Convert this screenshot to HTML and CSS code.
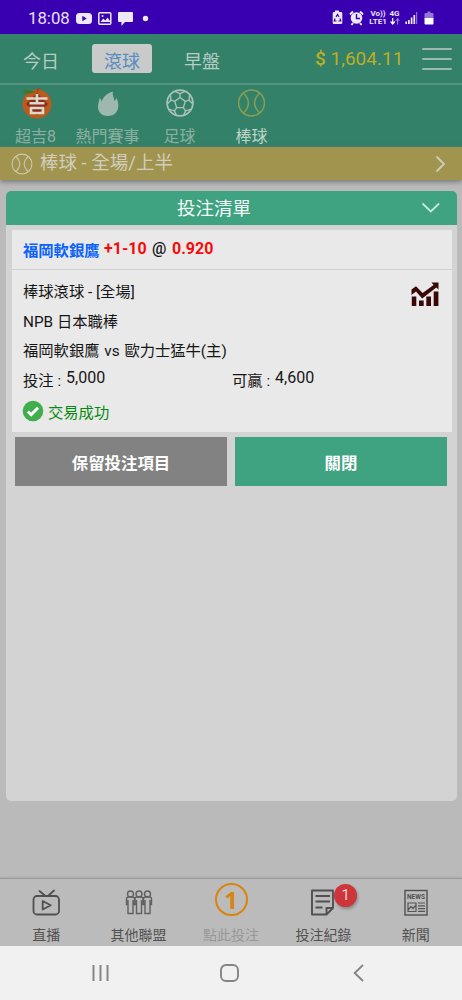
FILE: index.html
```
<!DOCTYPE html>
<html lang="zh-Hant">
<head>
<meta charset="utf-8">
<title>投注清單</title>
<link rel="stylesheet" href="styles.css">
</head>
<body>
<div class="screen">
  <div class="status">
    <span class="clock">18:08</span>
    <svg class="status-left" width="76" height="20" viewBox="0 0 76 20">
      <rect x="0" y="5" width="16" height="11" rx="3.5" fill="#eee8fb"/><path d="M6.3 7.800v5.400l4.400-2.700z" fill="#3900b2"/>
      <rect x="22.800" y="4.800" width="12" height="11.400" rx="1" fill="none" stroke="#eee8fb" stroke-width="1.500"/>
      <path d="M24.500 14l2.800-3.600 2 2 2.300-3 3 4.600z" fill="#eee8fb"/><circle cx="26.500" cy="8" r="1" fill="#eee8fb"/>
      <path d="M43 4h13q1 0 1 1v8q0 1-1 1h-7l-3.600 4v-4H43q-1 0-1-1V5q0-1 1-1z" fill="#eee8fb"/>
      <circle cx="69.500" cy="10.500" r="2.700" fill="#eee8fb"/>
    </svg>
    <span class="spacer"></span>
    <svg class="status-right" width="36" height="20" viewBox="0 0 36 20">
      <path d="M4 4V2.500h4V4h2q1.300 0 1.300 1.300v9.400q0 1.300-1.300 1.300H3Q1.700 16 1.700 14.700V5.300Q1.700 4 3 4z" fill="#eee8fb"/>
      <path d="M5 9l1.500-2.500L8 9M9 10.500l.7 2.500H7.500M5.500 13H3.300L4 10.500" fill="none" stroke="#3900b2" stroke-width="1.200"/>
      <circle cx="25.500" cy="10" r="5.800" fill="#eee8fb"/>
      <path d="M25.500 6v4.500h3.600" fill="none" stroke="#3900b2" stroke-width="1.400"/>
      <path d="M19 6.500l3-3M32 6.500l-3-3M22 15l-1.500 2M29 15l1.500 2" stroke="#eee8fb" stroke-width="2"/>
    </svg>
    <span class="volte"><b>Vo))</b><b>LTE1</b></span>
    <span class="fourg"><b>4G</b>
      <svg width="10" height="7" viewBox="0 0 10 7"><path d="M2.700 0v6M.6 3.500l2.100 2.500 2.100-2.500" fill="none" stroke="#fff" stroke-width="1.200"/><path d="M7.600 6.500v-6M5.800 3l1.800-2.300L9.400 3" fill="none" stroke="#aa91dc"/></svg>
    </span>
    <svg class="signal" width="30" height="18" viewBox="0 0 30 18">
      <path d="M1.200 15v-2.500M3.900 15v-4M6.600 15V8.500M9.300 15V6" stroke="#eee8fb" stroke-width="1.700"/><path d="M11.600 15V3" stroke="#8e70d0" stroke-width="1.200"/>
      <path d="M20.500 4h2V2.500h3V4h2q1 0 1 1v4h-9V5q0-1 1-1z" fill="#9475d6"/><path d="M19.500 9h9v5.500q0 1-1 1h-7q-1 0-1-1z" fill="#fff"/>
    </svg>
  </div>

  <div class="topnav">
    <span class="tab tab-today">今日</span>
    <span class="tab tab-live">滾球</span>
    <span class="tab tab-early">早盤</span>
    <span class="balance"><b>$</b> 1,604.11</span>
    <span class="burger"><i></i><i></i><i></i></span>
  </div>

  <div class="sports">
    <div class="sport">
      <svg width="32" height="34" viewBox="0 0 32 34">
        <circle cx="17" cy="18" r="14.500" fill="#bb5a1c"/>
        <path d="M17 7l11 11-11 11L6 18z" fill="#8e2b16"/>
        <path d="M15 6C11 4 5 3 3 5c2 4 8 3 12 1z" fill="#42762b"/><path d="M15.500 7L18 1l2 1-2.500 5z" fill="#a04d26"/>
        <path d="M6.500 12.500h21M17 8v9M9.500 17.200h15M11 22h12v5H11z" fill="none" stroke="#d9d9ce" stroke-width="2.600"/>
      </svg>
      <span>超吉8</span>
    </div>
    <div class="sport">
      <svg width="32" height="34" viewBox="0 0 32 34"><path d="M21 5.500c-1.200 3.500 1.500 6 1.200 9.500 1.500-.8 2-2 2-3.500 2.200 3.800 2.500 8 1.800 11-1.300 4.800-5 7.500-10 7.500-5.600 0-9.700-3.500-10-8.500-.2-3.800 1.300-6.500 1.600-9.500 1.300 1 1.900 2.300 1.900 4C11.500 10.500 14.500 7.500 21 5.500z" fill="#9eb8ad"/></svg>
      <span>熱門賽事</span>
    </div>
    <div class="sport">
      <svg width="32" height="34" viewBox="0 0 32 34"><g fill="none" stroke="#abc2b8" stroke-width="1.400" stroke-linejoin="round"><circle cx="16" cy="17" r="12.900" stroke-width="1.700"/><path d="M16 11.500l5.300 3.900-2 6.200h-6.600l-2-6.200zM16 11.500V7.700M21.300 15.400l3.800-1.200M19.300 21.600l2.300 3.300M12.700 21.600l-2.300 3.300M10.700 15.400l-3.800-1.200M11 5.300l5 2.400 5-2.400M25.600 8.800l-.5 5.400 3.700 3.800M27.500 23.200l-5.900 1.700-2 4.500M12.400 29.400l-2-4.500-5.900-1.700M3.200 18l3.700-3.800-.5-5.400"/></g></svg>
      <span>足球</span>
    </div>
    <div class="sport sport-on">
      <svg width="32" height="34" viewBox="0 0 32 34"><g fill="none" stroke="#899e52" stroke-width="1.500"><circle cx="15.500" cy="17" r="12.900"/><path d="M7.700 7.200q9.400 9.800 0 19.600M23.300 7.200q-9.400 9.800 0 19.600"/></g></svg>
      <span>棒球</span>
    </div>
  </div>

  <div class="filter">
    <svg width="22" height="22" viewBox="0 0 22 22"><g fill="none" stroke="#cbc7ac" stroke-width="1.100"><circle cx="11" cy="11" r="9.900"/><path d="M4.700 3.500q8.200 7.500 0 15M17.300 3.500q-8.200 7.500 0 15"/></g></svg>
    <span>棒球 - 全場/上半</span>
    <svg class="chev" width="12" height="18" viewBox="0 0 12 18"><path d="M1.500 1.500L9 9l-7.500 7.500" fill="none" stroke="#d0cdbd" stroke-width="1.800"/></svg>
  </div>

  <main class="content">
    <section class="panel">
      <header class="panel-head"><span>投注清單</span>
        <svg width="20" height="12" viewBox="0 0 20 12"><path d="M1.500 1.500l8.300 8 8.300-8" fill="none" stroke="#c5eadb" stroke-width="1.800"/></svg>
      </header>
      <article class="card">
        <div class="pick"><b class="team">福岡軟銀鷹</b><b class="red handicap">+1-10</b><span class="at">@</span><b class="red">0.920</b></div>
        <div class="details">
          <div class="lines">
            <p>棒球滾球 - [全場]</p>
            <p>NPB 日本職棒</p>
            <p class="match">福岡軟銀鷹 vs 歐力士猛牛(主)</p>
          </div>
          <svg class="trend" width="28" height="26" viewBox="0 0 28 26"><g fill="#3b0808"><path d="M.8 15.500h4.500V25H.8zM8 19.500h4.700V25H8zM15.300 15.500H20V25h-4.700zM22.700 10.500h4.700V25h-4.700z"/><path d="M20.500 1.500h7v7l-2.200-2L11.200 17.600 5 10.400 .5 14V8.500L5 5.300l6.600 6.700L22.600 3.900z"/></g></svg>
          <div class="amounts">
            <span class="amount">投注 : <span class="num">5,000</span></span>
            <span class="amount">可贏 : <span class="num">4,600</span></span>
          </div>
          <div class="success">
            <svg width="22" height="22" viewBox="0 0 22 22"><circle cx="11" cy="11" r="10.300" fill="#41ad4c"/><path d="M5.800 11.500l3.400 3.200 6.800-7" fill="none" stroke="#fff" stroke-width="3"/></svg>
            交易成功
          </div>
        </div>
      </article>
      <div class="actions"><button class="keep">保留投注項目</button><button class="close">關閉</button></div>
    </section>
  </main>

  <nav class="bottom">
    <div class="item">
      <svg width="32" height="32" viewBox="0 0 32 32"><g fill="none" stroke="#505050" stroke-width="1.800" stroke-linecap="round" stroke-linejoin="round"><rect x="3.500" y="10" width="25.500" height="18.500" rx="3.500"/><path d="M9.500 5l5.300 4.500M24 4.500l-5.500 5M12.700 15v8.500l8-4.200z"/></g></svg>
      <span>直播</span>
    </div>
    <div class="item">
      <svg width="32" height="32" viewBox="0 0 32 32"><g fill="none" stroke="#606060" stroke-width="1.400"><circle cx="7.500" cy="8" r="3"/><circle cx="16" cy="8" r="3"/><circle cx="24.500" cy="8" r="3"/><path d="M5 18.500H3.500V13q0-2 2-2h4q2 0 2 2v5.500H10V27.500H5V14M10 14v5M13.500 18.500H12V13q0-2 2-2h4q2 0 2 2v5.500h-1.500v9h-5V14M18.500 14v5M22 18.500h-1.500V13q0-2 2-2h4q2 0 2 2v5.500H27v9h-5V14M27 14v5"/></g></svg>
      <span>其他聯盟</span>
    </div>
    <div class="item muted">
      <div class="one">1</div>
      <span>點此投注</span>
    </div>
    <div class="item">
      <svg width="32" height="32" viewBox="0 0 32 32"><g fill="none" stroke="#505050" stroke-width="1.900" stroke-linejoin="round"><path d="M19.500 28.500H5V4.500h21v17.500zM19.500 28.500V22H26"/><path d="M8.500 10h14.500M8.500 15.500h14.500M8.500 21.500h7"/></g></svg>
      <span>投注紀錄</span>
      <em class="badge">1</em>
    </div>
    <div class="item">
      <svg width="32" height="32" viewBox="0 0 32 32"><rect x="5" y="4.500" width="22" height="24.500" fill="none" stroke="#505050" stroke-width="1.400"/><text x="16" y="13" class="news" textLength="18">NEWS</text><path d="M18 17h7M18 19.800h7M18 22.600h7M18 25.400h7M8 17h8v8.500H8zM8.500 23.500l2.500-3 2 2 2.500-3" fill="none" stroke="#555" stroke-width="1.200"/></svg>
      <span>新聞</span>
    </div>
  </nav>
  <div class="system">
    <svg class="recent" width="20" height="20" viewBox="0 0 20 20"><path d="M2.500 2v16M9.500 2v16M16.500 2v16" stroke="#858585" stroke-width="2"/></svg>
    <svg class="home" width="20" height="20" viewBox="0 0 20 20"><rect x="1" y="2" width="17" height="16" rx="5" fill="none" stroke="#858585" stroke-width="1.900"/></svg>
    <svg class="back" width="14" height="20" viewBox="0 0 14 20"><path d="M12 2l-8.300 8 8.300 8" fill="none" stroke="#858585" stroke-width="1.900"/></svg>
  </div>
</div>
</body>
</html>
```

FILE: styles.css
```
* { box-sizing: border-box; }
body { margin: 0; font-family: Roboto, "Noto Sans CJK TC", sans-serif; color: #161616; }
svg { display: block; flex: none; }
p { margin: 0; }
.screen { width: 462px; height: 1000px; display: flex; flex-direction: column; background: #bababa; overflow: hidden; }
.spacer { flex: 1; }

.status { height: 34px; flex: none; display: flex; align-items: center; padding: 1px 25px 0 28px; background: #3900b2; color: #e9e1fa; }
.clock { width: 48px; font-size: 16.800px; line-height: 20px; white-space: nowrap; margin-top: 1px; }
.status-left { margin-top: 0; }
.status-right { margin-right: 2px; }
.volte, .fourg { display: flex; flex-direction: column; font-size: 8px; line-height: 8px; text-align: center; }
.volte { width: 18px; margin-right: 2px; }
.volte b, .fourg b { white-space: nowrap; }
.fourg { width: 11px; align-items: center; margin-right: 5px; }
.signal { margin-right: 2px; }

.topnav { height: 51px; flex: none; display: flex; align-items: center; padding-left: 15px; background: #338168; border-bottom: 2px solid #559280; font-size: 18px; color: #b7cdc5; }
.tab { height: 29px; line-height: 29px; text-align: center; padding-top: 3px; flex: none; }
.tab-today { width: 52px; }
.tab-live { width: 60px; margin: 0 25px; background: #c9cbcb; border-radius: 3px; color: #5b8cc0; }
.tab-early { width: 50px; }
.balance { width: 89px; margin-left: 88px; font-size: 19px; color: #bcae27; white-space: nowrap; }
.balance b { font-weight: 500; }
.burger { display: flex; flex-direction: column; gap: 8px; width: 30px; margin-left: 18px; }
.burger i { height: 2px; background: #9cb9ae; border-radius: 1px; }

.sports { height: 62px; flex: none; display: flex; background: #338168; font-size: 16px; color: #8eb0a3; }
.sport { width: 72px; display: flex; flex-direction: column; align-items: center; padding-top: 1px; white-space: nowrap; }
.sport span { line-height: 24px; margin-top: 5px; margin-left: -1px; }
.sport-on { color: #c1d4cc; }

.filter { height: 33px; flex: none; display: flex; align-items: center; padding: 0 15px 0 11px; background: #a1944e; box-shadow: 0 2px 5px #777; font-size: 18.500px; color: #d1cebf; }
.filter span { margin-left: 7px; line-height: 30px; margin-top: -1px; }
.filter .chev { margin-left: auto; }

.content { flex: 1; padding: 11px 5px 0 6px; }
.panel { height: 610px; background: #d3d3d3; border-radius: 5px; overflow: hidden; }
.panel-head { height: 34px; display: flex; align-items: center; justify-content: space-between; padding: 3px 16px 0 171px; background: #3fa280; color: #f1fbf7; font-size: 18.500px; line-height: 31px; }
.panel-head svg { margin-top: -4px; }
.card { height: 202px; margin: 5px 5px 0 6px; background: #e9e9e9; }
.pick { height: 40px; display: flex; align-items: center; padding: 0 11px; border-bottom: 1px solid #d0d0d0; font-size: 16px; white-space: nowrap; }
.pick > * { line-height: 20px; margin-top: -1px; }
.pick .team { font-size: 15.300px; color: #0862fb; margin-top: 3px; width: 76px; }
.red { color: #f90909; }
.handicap { margin-left: 5px; width: 43px; }
.pick .at { width: 20px; margin-left: 5px; font-weight: 500; }
.details { display: grid; grid-template-columns: 1fr 28px; padding: 8px 13px 0 11px; font-size: 15.300px; }
.lines p { height: 29.500px; line-height: 29.500px; white-space: nowrap; }
.lines .match { word-spacing: 1px; }
.trend { margin-top: 3px; }
.amounts { grid-column: 1 / -1; display: grid; grid-template-columns: 209px 1fr; height: 28px; line-height: 29px; }
.amount { display: flex; gap: 5px; }
.num { font-size: 16px; line-height: 21px; }
.success { grid-column: 1 / -1; height: 33px; display: flex; align-items: center; gap: 4px; color: #07890e; }
.success svg { margin-left: -1px; }
.actions { display: flex; gap: 8px; padding: 5px 10px 0 9px; }
.actions button { flex: 1; height: 49px; padding: 0; border: 0; font: bold 16.400px Roboto, "Noto Sans CJK TC", sans-serif; color: #fff; }
.keep { background: #828282; }
.close { background: #3fa280; }

.bottom { height: 68px; flex: none; display: flex; border-top: 1px solid #999; box-shadow: 0 -1px 2px #aaa; background: #bbb; font-size: 14px; color: #515151; }
.item { flex: 1; position: relative; display: flex; flex-direction: column; align-items: center; padding-top: 7px; }
.item span { line-height: 22px; margin-top: 6px; white-space: nowrap; }
.muted { color: #989898; }
.one { width: 33px; height: 33px; margin: -3px 0 2px; border: 2px solid #d9840c; border-radius: 50%; color: #d9840c; font: bold 24px/30px "Noto Sans", sans-serif; text-align: center; }
.badge { position: absolute; left: 57px; top: 5px; width: 23px; height: 23px; border-radius: 50%; background: #ce353b; box-shadow: 1px 2px 3px #888; color: #f0d3d4; font-style: normal; font-size: 15px; line-height: 23px; text-align: center; }
.news { font: bold 6.500px Roboto, sans-serif; fill: #505050; text-anchor: middle; }
.system { height: 54px; flex: none; display: grid; grid-template-columns: 91px 129px 131px 1fr; align-items: center; background: #f1f1f1; }
.recent { grid-column: 2; }
```
